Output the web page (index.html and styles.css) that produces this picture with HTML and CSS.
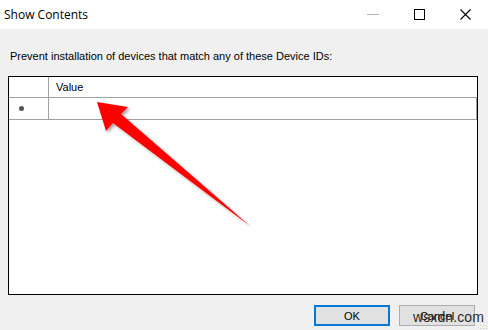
FILE: index.html
```html
<!DOCTYPE html>
<html>
<head>
<meta charset="utf-8">
<link rel="stylesheet" href="styles.css">
</head>
<body>
<div class="window">
  <div class="titlebar">
    <span class="title">Show Contents</span>
    <div class="controls">
      <span class="ctl min"><svg width="12" height="12" viewBox="0 0 12 12"><path d="M0 5.5H12" stroke="#b4b4b4" stroke-width="1"/></svg></span>
      <span class="ctl max"><svg width="11" height="11" viewBox="0 0 11 11"><rect x="0.5" y="0.5" width="10" height="10" fill="none" stroke="#000" stroke-width="1"/></svg></span>
      <span class="ctl close"><svg width="11" height="11" viewBox="0 0 11 11"><path d="M0.5 0.5L10.5 10.5M10.5 0.5L0.5 10.5" stroke="#000" stroke-width="1.1"/></svg></span>
    </div>
  </div>
  <div class="content">
    <p class="label">Prevent installation of devices that match any of these Device IDs:</p>
    <div class="grid">
      <div class="cell rowhead"></div>
      <div class="cell colhead">Value</div>
      <div class="cell rowhead"><span class="dot"></span></div>
      <div class="cell value"></div>
    </div>
    <div class="buttons">
      <button class="btn default">OK</button>
      <button class="btn">Cancel</button>
    </div>
  </div>
  <span class="watermark">wsxdn.com</span>
  <span class="grip"></span>
  <svg class="arrow" width="488" height="330" viewBox="0 0 488 330">
    <defs>
      <filter id="sh" x="-20%" y="-20%" width="140%" height="140%">
        <feDropShadow dx="2" dy="2" stdDeviation="1.5" flood-color="#000" flood-opacity="0.35"/>
      </filter>
    </defs>
    <path d="M97 102 L128 107 L121 114 L250 226 L113 123 L106 131 Z" fill="#ff0000" filter="url(#sh)"/>
  </svg>
</div>
</body>
</html>
```

FILE: styles.css
```css
html, body {
  margin: 0;
  padding: 0;
}
body {
  width: 488px;
  height: 330px;
  overflow: hidden;
  background: #f0f0f0;
  font-family: "Liberation Sans", Arial, sans-serif;
}
.window {
  position: relative;
  width: 488px;
  height: 330px;
  display: flex;
  flex-direction: column;
}
.titlebar {
  height: 29px;
  background: #fff;
  display: flex;
  align-items: center;
  justify-content: space-between;
}
.title {
  margin-left: 4px;
  font-family: "Open Sans", "Noto Sans", sans-serif;
  font-size: 12px;
  color: #000;
}
.controls {
  display: flex;
  align-items: center;
  height: 100%;
}
.ctl {
  display: flex;
  align-items: center;
  justify-content: center;
  width: 46px;
  height: 100%;
}
.ctl.min { margin-right: 0; }
.ctl svg { display: block; }
.content {
  flex: 1;
  display: flex;
  flex-direction: column;
  padding: 0 10px 0 8px;
}
.label {
  margin: 21px 0 0 2px;
  font-size: 11px;
  line-height: 13px;
  color: #000;
}
.grid {
  margin-top: 13px;
  height: 217px;
  border: 1px solid #000;
  background: #fff;
  display: grid;
  grid-template-columns: 40px 1fr;
  grid-template-rows: 21px 22px;
  align-content: start;
}
.cell {
  border-right: 1px solid #a0a0a0;
  border-bottom: 1px solid #a0a0a0;
  font-size: 11px;
  color: #000;
  display: flex;
  align-items: center;
}
.colhead {
  padding-left: 7px;
  border-right: none;
}
.value {
  border-right: 1px solid #a0a0a0;
}
.rowhead {
  justify-content: flex-start;
  padding-left: 10px;
}
.dot {
  width: 5px;
  height: 5px;
  border-radius: 50%;
  background: #555;
}
.buttons {
  display: flex;
  justify-content: flex-end;
  gap: 9px;
  margin-top: 10px;
  margin-right: 3px;
}
.btn {
  width: 76px;
  height: 21px;
  margin: 0;
  padding: 0;
  background: #e1e1e1;
  border: 1px solid #adadad;
  font-family: "Liberation Sans", Arial, sans-serif;
  font-size: 11px;
  color: #000;
}
.btn.default {
  border: 1px solid #0078d7;
  box-shadow: inset 0 0 0 1px #0078d7;
}
.watermark {
  position: absolute;
  left: 413px;
  top: 309px;
  font-family: "Liberation Sans", Arial, sans-serif;
  font-size: 14px;
  color: #2a2a2a;
  letter-spacing: 0.1px;
}
.grip {
  position: absolute;
  right: 1px;
  bottom: 1px;
  width: 8px;
  height: 8px;
  background-image: radial-gradient(circle, #c8c8c8 0.9px, transparent 1px);
  background-size: 3px 3px;
}
.arrow {
  position: absolute;
  left: 0;
  top: 0;
  pointer-events: none;
}
```
